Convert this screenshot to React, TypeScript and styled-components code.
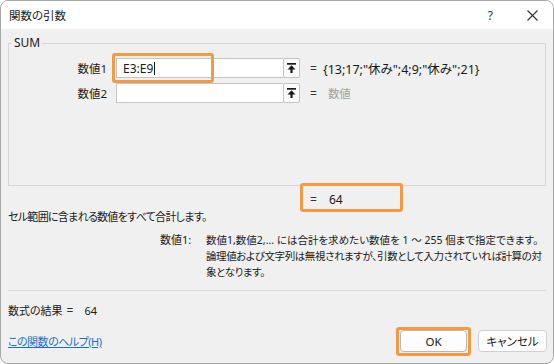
import styled, { createGlobalStyle } from "styled-components";

const GlobalStyle = createGlobalStyle`
  html, body {
    margin: 0;
    padding: 0;
    background: #ffffff;
  }
  body {
    font-family: "Noto Sans", "Noto Sans CJK JP", sans-serif;
    font-feature-settings: "palt";
    font-size: 12px;
    color: #1a1a1a;
  }
`;

interface IArg {
  label: string;
  value: string;
  result: string;
  empty?: boolean;
  highlight?: boolean;
}

const args: IArg[] = [
  { label: "数値1", value: "E3:E9", result: '{13;17;"休み";4;9;"休み";21}', highlight: true },
  { label: "数値2", value: "", result: "数値", empty: true },
];

// 引数の説明（改行位置は元の画面どおり）
const descLines = [
  { text: "数値1,数値2,... には合計を求めたい数値を 1 ～ 255 個まで指定できます。", spacing: 0 },
  { text: "論理値および文字列は無視されますが、引数として入力されていれば計算の対", spacing: -0.4 },
  { text: "象となります。", spacing: -0.4 },
];

function UploadIcon() {
  return (
    <svg width="9" height="10" viewBox="0 0 9 10">
      <rect x="0" y="0" width="9" height="1.7" fill="#1a1a1a" />
      <polygon points="4.5,2.3 0.5,6.5 8.5,6.5" fill="#1a1a1a" />
      <rect x="3.4" y="6" width="2.2" height="4" fill="#1a1a1a" />
    </svg>
  );
}

function App() {
  return (
    <>
      <GlobalStyle />
      <Window>
        <TitleBar>
          <Title>関数の引数</Title>
          <TitleButtons>
            <Help>?</Help>
            <svg width="11" height="11" viewBox="0 0 11 11">
              <path d="M0.5 0.5 L10.5 10.5 M10.5 0.5 L0.5 10.5" stroke="#333" strokeWidth="1.1" />
            </svg>
          </TitleButtons>
        </TitleBar>

        <Body>
          <Group>
            <Legend>SUM</Legend>
            <ArgGrid>
              {args.map((a) => (
                <ArgRow key={a.label}>
                  <ArgLabel>{a.label}</ArgLabel>
                  <InputGroup>
                    <RefInput>
                      {a.value}
                      {a.highlight && <Caret />}
                    </RefInput>
                    <RefButton>
                      <UploadIcon />
                    </RefButton>
                    {a.highlight && <InputMark />}
                  </InputGroup>
                  <Eq>=</Eq>
                  <ArgValue $empty={a.empty}>{a.result}</ArgValue>
                </ArgRow>
              ))}
            </ArgGrid>
          </Group>

          <ResultRow>
            <Eq>=</Eq>
            <span>64</span>
            <ResultMark />
          </ResultRow>

          <Summary>セル範囲に含まれる数値をすべて合計します。</Summary>

          <ArgDesc>
            <ArgDescLabel>数値1:</ArgDescLabel>
            <div>
              {descLines.map((l) => (
                <DescLine key={l.text} $spacing={l.spacing}>
                  {l.text}
                </DescLine>
              ))}
            </div>
          </ArgDesc>

          <Separator />

          <FormulaResult>
            数式の結果<ResultEq>=</ResultEq>64
          </FormulaResult>

          <Footer>
            <HelpLink href="#">この関数のヘルプ(H)</HelpLink>
            <Buttons>
              <DialogButton $primary>
                OK
                <OkMark />
              </DialogButton>
              <DialogButton>キャンセル</DialogButton>
            </Buttons>
          </Footer>
        </Body>
      </Window>
    </>
  );
}

const Window = styled.div`
  box-sizing: border-box;
  width: 554px;
  height: 364px;
  border: 1px solid #a8a8a8;
  border-radius: 8px;
  overflow: hidden;
  background: #f0f0f0;
  display: flex;
  flex-direction: column;
`;

const TitleBar = styled.div`
  height: 28px;
  flex-shrink: 0;
  background: #ffffff;
  display: flex;
  align-items: center;
  justify-content: space-between;
  padding: 0 15px 0 8px;
`;

const Title = styled.div`
  font-size: 11.5px;
  color: #1a1a1a;
`;

const TitleButtons = styled.div`
  display: flex;
  align-items: center;
  gap: 34px;
`;

const Help = styled.span`
  font-size: 12px;
  color: #333;
`;

const Body = styled.div`
  flex: 1;
  display: flex;
  flex-direction: column;
  padding: 0 7px;
`;

const Group = styled.fieldset`
  box-sizing: border-box;
  margin: 7px 0 0;
  height: 150px;
  padding: 8px 0 0;
  border: 1px solid #d6d6d6;
  min-inline-size: 0;
`;

const Legend = styled.legend`
  margin-left: 3px;
  padding: 0 2px;
  font-size: 12px;
  line-height: 14px;
  color: #1a1a1a;
`;

const ArgGrid = styled.div`
  display: flex;
  flex-direction: column;
  gap: 5px;
`;

const ArgRow = styled.div`
  display: grid;
  grid-template-columns: 101px 184px auto 1fr;
  column-gap: 6px;
  align-items: center;
  height: 20px;
`;

const ArgLabel = styled.div`
  text-align: right;
  padding-right: 3px;
  font-size: 11.5px;
`;

const InputGroup = styled.div`
  position: relative;
  display: flex;
  height: 20px;
`;

const RefInput = styled.div`
  box-sizing: border-box;
  width: 167px;
  height: 20px;
  background: #ffffff;
  border: 1px solid #c4c4c4;
  border-right: none;
  padding-left: 6px;
  display: flex;
  align-items: center;
  font-size: 12px;
`;

const Caret = styled.span`
  display: inline-block;
  width: 1px;
  height: 13px;
  margin-left: 1px;
  background: #1a1a1a;
`;

const RefButton = styled.div`
  box-sizing: border-box;
  width: 17px;
  height: 20px;
  background: #fbfbfb;
  border: 1px solid #c4c4c4;
  border-radius: 2px;
  display: flex;
  align-items: center;
  justify-content: center;
`;

const Eq = styled.span`
  margin-left: 4px;
  font-size: 12px;
  color: #333;
`;

const ArgValue = styled.div<{ $empty?: boolean }>`
  font-size: ${(p) => (p.$empty ? "11.5px" : "12.5px")};
  color: ${(p) => (p.$empty ? "#a0a0a0" : "#1a1a1a")};
  white-space: nowrap;
  padding-left: ${(p) => (p.$empty ? "5px" : "0")};
`;

const Mark = styled.div`
  position: absolute;
  box-sizing: border-box;
  border: 3px solid #f59a44;
  border-radius: 3px;
  pointer-events: none;
`;

const InputMark = styled(Mark)`
  left: -4px;
  top: -5px;
  width: 102px;
  height: 30px;
`;

const ResultRow = styled.div`
  position: relative;
  margin: 5px 0 0 298px;
  height: 16px;
  display: flex;
  align-items: center;
  gap: 12px;
  font-size: 12px;
`;

const ResultMark = styled(Mark)`
  left: -6px;
  top: -8px;
  width: 103px;
  height: 29px;
`;

const Summary = styled.div`
  margin-top: 2px;
  line-height: 16px;
  font-size: 11px;
  letter-spacing: -0.7px;
`;

const ArgDesc = styled.div`
  margin-top: 7px;
  display: flex;
  font-size: 11px;
  line-height: 16px;
`;

const ArgDescLabel = styled.div`
  width: 46px;
  margin-left: 152px;
  flex-shrink: 0;
`;

const DescLine = styled.div<{ $spacing: number }>`
  font-size: 10.5px;
  white-space: nowrap;
  letter-spacing: ${(p) => p.$spacing}px;
`;

const Separator = styled.div`
  margin-top: 10px;
  height: 1px;
  background: #d8d8d8;
`;

const FormulaResult = styled.div`
  margin-top: 12px;
  line-height: 16px;
  font-size: 11px;
`;

const ResultEq = styled.span`
  margin: 0 11px 0 4px;
  font-size: 12px;
  color: #333;
`;

const Footer = styled.div`
  margin-top: 11px;
  margin-right: -1px;
  display: flex;
  align-items: center;
  justify-content: space-between;
`;

const HelpLink = styled.a`
  font-size: 11px;
  letter-spacing: -0.5px;
  color: #1a6fc4;
  text-decoration: underline;
`;

const Buttons = styled.div`
  display: flex;
  gap: 11px;
`;

const DialogButton = styled.div<{ $primary?: boolean }>`
  position: relative;
  box-sizing: border-box;
  width: ${(p) => (p.$primary ? "67px" : "69px")};
  height: 22px;
  background: #fdfdfd;
  border: 1px solid ${(p) => (p.$primary ? "#b8b8b8" : "#d0d0d0")};
  border-radius: 4px;
  display: flex;
  align-items: center;
  justify-content: center;
  font-size: 11.5px;
`;

const OkMark = styled(Mark)`
  left: -5px;
  top: -4px;
  width: 75px;
  height: 29px;
`;

export default App;
